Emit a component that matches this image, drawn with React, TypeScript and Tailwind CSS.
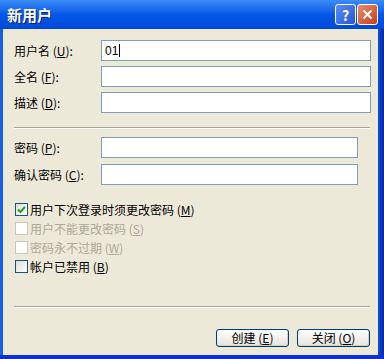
import React from "react";

const FONT = { fontFamily: '"Noto Sans CJK SC", "Liberation Sans", sans-serif' };

function Label({ text, keyChar }: { text: string; keyChar: string }) {
  return (
    <span className="w-[87px] shrink-0 whitespace-nowrap text-[12px] leading-none text-black">
      {text} (<span className="underline">{keyChar}</span>):
    </span>
  );
}

function Field({ label, keyChar, value, wide = true }: { label: string; keyChar: string; value?: string; wide?: boolean }) {
  return (
    <div className="flex items-center">
      <Label text={label} keyChar={keyChar} />
      <div
        className={`flex h-[21px] items-center border border-[#7f9db9] bg-white px-[3px] text-[12px] leading-none text-black ${
          wide ? "w-[270px]" : "w-[257px]"
        }`}
      >
        {value && (
          <>
            <span style={{ fontFamily: '"Liberation Sans", sans-serif' }}>{value}</span>
            <span className="ml-[1px] h-[13px] w-px bg-black" />
          </>
        )}
      </div>
    </div>
  );
}

function Separator() {
  return (
    <div className="w-[356px]">
      <div className="h-px bg-[#aca899]" />
      <div className="h-px bg-white" />
    </div>
  );
}

function CheckRow({ text, keyChar, checked, disabled }: { text: string; keyChar: string; checked?: boolean; disabled?: boolean }) {
  return (
    <div className="flex h-[19px] items-center gap-[2px]">
      <div
        className={`ml-[1px] flex h-[13px] w-[13px] items-center justify-center border ${
          disabled ? "border-[#cac8bb] bg-white" : "border-[#1c5180] bg-gradient-to-br from-[#dcdcd7] to-white"
        }`}
      >
        {checked && (
          <svg width="9" height="9" viewBox="0 0 9 9">
            <path d="M1 4.5 L3.5 7 L8 1.8" fill="none" stroke="#21a121" strokeWidth="2" />
          </svg>
        )}
      </div>
      <span className={`text-[12px] leading-none whitespace-nowrap ${disabled ? "text-[#aca899]" : "text-black"}`}>
        {text} (<span className="underline">{keyChar}</span>)
      </span>
    </div>
  );
}

function XpButton({ text, keyChar }: { text: string; keyChar: string }) {
  return (
    <button className="flex h-[18px] w-[73px] items-center justify-center rounded-[3px] border border-[#003c74] bg-gradient-to-b from-white to-[#e3e2da] text-[12px] leading-none text-black shadow-[inset_-1px_-1px_0_#d6d0c5]">
      {text} (<span className="underline">{keyChar}</span>)
    </button>
  );
}

export default function App() {
  return (
    <div className="flex h-[359px] w-[384px] flex-col overflow-hidden bg-[#0a4fe0]" style={FONT}>
      {/* Title bar */}
      <div className="flex h-[29px] shrink-0 items-center justify-between bg-gradient-to-b from-[#3c8cf8] via-[#0558e6] to-[#0048d8] pl-[7px] pr-[6px]">
        <span className="text-[15px] font-bold leading-none text-white [text-shadow:1px_1px_0_#0a1f6a]">新用户</span>
        <div className="flex gap-[1px]">
          <div className="flex h-[21px] w-[21px] items-center justify-center rounded-[3px] border border-white bg-gradient-to-br from-[#5b8ef5] to-[#2454d8] text-[14px] font-bold leading-none text-white">
            ?
          </div>
          <div className="flex h-[21px] w-[21px] items-center justify-center rounded-[3px] border border-white bg-gradient-to-br from-[#e88c6a] to-[#c43d17]">
            <svg width="11" height="11" viewBox="0 0 11 11">
              <path d="M1.5 1.5 L9.5 9.5 M9.5 1.5 L1.5 9.5" stroke="white" strokeWidth="2" />
            </svg>
          </div>
        </div>
      </div>

      {/* Frame + body */}
      <div className="flex flex-1">
        <div className="w-[3px] shrink-0 bg-[#1a5ee8]" />
        <div className="flex flex-1 flex-col bg-[#ece9d8] pl-[11px] pt-[11px]">
          <div className="flex flex-col gap-[5px]">
            <Field label="用户名" keyChar="U" value="01" />
            <Field label="全名" keyChar="F" />
            <Field label="描述" keyChar="D" />
          </div>
          <div className="mt-[14px]">
            <Separator />
          </div>
          <div className="mt-[8px] flex flex-col gap-[6px]">
            <Field label="密码" keyChar="P" wide={false} />
            <Field label="确认密码" keyChar="C" wide={false} />
          </div>
          <div className="mt-[15px] flex flex-col">
            <CheckRow text="用户下次登录时须更改密码" keyChar="M" checked />
            <CheckRow text="用户不能更改密码" keyChar="S" disabled />
            <CheckRow text="密码永不过期" keyChar="W" disabled />
            <CheckRow text="帐户已禁用" keyChar="B" />
          </div>
          <div className="mt-[30px]">
            <Separator />
          </div>
          <div className="mt-[21px] flex w-[356px] justify-end gap-[8px]">
            <XpButton text="创建" keyChar="E" />
            <XpButton text="关闭" keyChar="O" />
          </div>
        </div>
        <div className="w-[6px] shrink-0 bg-gradient-to-r from-[#0a4fe0] to-[#08249a]" />
      </div>
      <div className="h-[4px] shrink-0 bg-[#0831d9]" />
    </div>
  );
}
